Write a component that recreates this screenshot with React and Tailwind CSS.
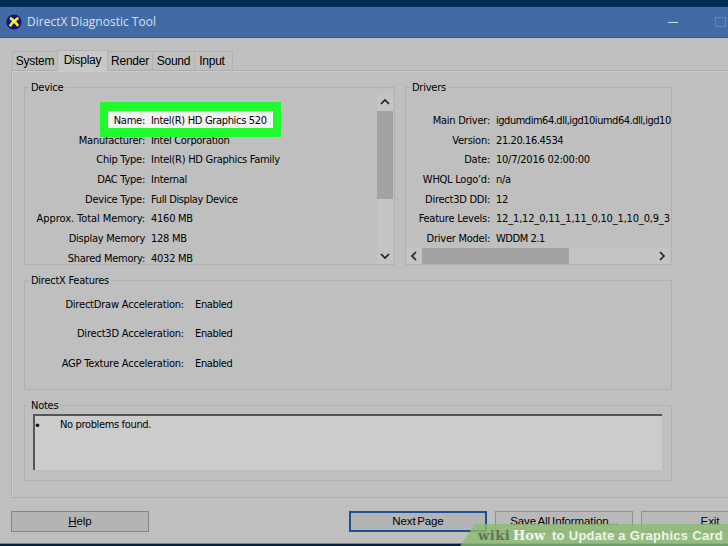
const deviceRows = [
  { label: "Name:", value: "Intel(R) HD Graphics 520", highlight: true, tracking: "tracking-[-0.33px]" },
  { label: "Manufacturer:", value: "Intel Corporation", tracking: "tracking-[-0.3px]" },
  { label: "Chip Type:", value: "Intel(R) HD Graphics Family", tracking: "tracking-[-0.28px]" },
  { label: "DAC Type:", value: "Internal" },
  { label: "Device Type:", value: "Full Display Device", tracking: "tracking-[-0.37px]" },
  { label: "Approx. Total Memory:", value: "4160 MB", labelTracking: "tracking-[-0.07px]" },
  { label: "Display Memory", value: "128 MB" },
  { label: "Shared Memory:", value: "4032 MB" },
];

const driverRows = [
  { label: "Main Driver:", value: "igdumdim64.dll,igd10iumd64.dll,igd10", tracking: "tracking-[-0.48px]" },
  { label: "Version:", value: "21.20.16.4534", tracking: "tracking-[-0.4px]" },
  { label: "Date:", value: "10/7/2016 02:00:00" },
  { label: "WHQL Logo’d:", value: "n/a" },
  { label: "Direct3D DDI:", value: "12" },
  { label: "Feature Levels:", value: "12_1,12_0,11_1,11_0,10_1,10_0,9_3", tracking: "tracking-[-0.17px]" },
  { label: "Driver Model:", value: "WDDM 2.1", tracking: "tracking-[-0.45px]" },
];

const features = ["DirectDraw Acceleration:", "Direct3D Acceleration:", "AGP Texture Acceleration:"];

const Chevron = ({ d }) => (
  <svg width="10" height="10" viewBox="0 0 10 10" fill="none" stroke="#222" strokeWidth="1.7" className="shrink-0">
    <path d={d} />
  </svg>
);

const Group = ({ title, className, children }) => (
  <fieldset className={`border border-[#b1b1b1] min-w-0 ${className}`}>
    <legend className="ml-[4px] px-[2px] h-4 leading-[18px]">{title}</legend>
    {children}
  </fieldset>
);

const Row = ({ label, value, highlight, labelWidth, tracking = "", labelTracking = "" }) => (
  <div className="relative flex h-[19.7px] items-center whitespace-nowrap">
    {highlight && (
      <div className="absolute z-10 left-[75px] -top-[9.4px] w-[181px] h-[35px] border-[9px] border-r-[8px] border-l-[8px] border-[#1ffb2c] bg-[#f3f3f3]" />
    )}
    <span className={`${labelWidth} ${labelTracking} shrink-0 text-right ${highlight ? "relative z-20" : ""}`}>{label}</span>
    <span className={`ml-[6px] ${tracking} ${highlight ? "relative z-20" : ""}`}>{value}</span>
  </div>
);

const TitleBar = () => (
  <div className="flex h-[31px] shrink-0 items-center bg-[#426aa5] border-b border-[#34588d] pl-[6px]">
    <svg width="16" height="16" viewBox="0 0 16 16">
      <circle cx="8" cy="8" r="7.6" fill="#10137a" />
      <path d="M4 4 Q8 6 12.2 12 M12.4 3.8 Q7 7 3.8 12.2" stroke="#f4e62c" strokeWidth="2.7" fill="none" />
      <circle cx="8" cy="8" r="1.4" fill="#fff36b" />
    </svg>
    <span className="ml-[5px] text-[12px] tracking-normal text-[#d6e0ef] font-['Open_Sans',sans-serif] [font-stretch:normal]">DirectX Diagnostic Tool</span>
    <div className="ml-auto flex items-center gap-[37px]">
      <div className="h-px w-[10px] bg-[#d0dcec]" />
      <div className="mr-[2px] h-[10px] w-[11px] border border-[#5f86c0]" />
    </div>
  </div>
);

const Tabs = () => (
  <div className="flex h-[20px] items-end pl-[12px] text-[12px] font-['Liberation_Sans',sans-serif]">
    <div className="flex h-[19px] w-[45px] items-center justify-center border-l border-t border-[#b2b2b2]">System</div>
    <div className="relative z-10 flex h-[21px] w-[51px] -mb-px items-center justify-center border border-b-0 border-[#b2b2b2] bg-[#c8c8c8] pb-[3px]">Display</div>
    <div className="flex h-[19px] w-[45px] items-center justify-center border-r border-t border-[#b2b2b2]">Render</div>
    <div className="flex h-[19px] w-[42px] items-center justify-center border-r border-t border-[#b2b2b2]">Sound</div>
    <div className="flex h-[19px] w-[38px] items-center justify-center border-r border-t border-[#b2b2b2] pr-[3px]">Input</div>
  </div>
);

const Watermark = () => (
  <div className="absolute bottom-0 right-0 flex h-[22px] w-[268px] items-center whitespace-nowrap">
    <svg className="absolute inset-0" width="268" height="22" viewBox="0 0 268 22">
      <path d="M15 0 H268 V22 H0 Z" fill="#8cbc72" fillOpacity="0.8" />
    </svg>
    <div className="relative ml-[18px] flex items-baseline leading-none [font-stretch:normal]">
      <span className="w-[35px] text-[13px] font-bold text-[#64715a] font-['DejaVu_Serif',serif] tracking-[0.5px]">wiki</span>
      <span className="w-[39px] text-[13px] font-bold text-[#f5f8f2] font-['DejaVu_Serif',serif] tracking-normal">How</span>
      <span className="text-[13px] font-bold text-[#eef4e9] font-['Liberation_Sans',sans-serif] tracking-[0.28px]">to Update a Graphics Card</span>
    </div>
  </div>
);

const App = () => {
  return (
    <div className="relative flex h-[546px] w-[728px] flex-col overflow-hidden bg-[#bfbfbf] text-[11px] text-black font-['DejaVu_Sans_Condensed','DejaVu_Sans',sans-serif] [font-stretch:condensed] tracking-[-0.25px]">
      <div className="h-[7px] shrink-0 bg-[#022c51]" />
      <TitleBar />

      <div className="flex flex-1 flex-col pt-[12px]">
        <Tabs />

        {/* Display tab page */}
        <div className="ml-[11px] h-[428px] border border-r-0 border-[#adadad] shadow-[inset_1px_1px_0_#cbcbcb] pl-[12px] pt-[8px]">
          <div className="flex gap-[10px]">
            <Group title="Device" className="h-[186px] w-[371px]">
              <div className="flex h-[169px] justify-between">
                <div className="pt-[16.4px]">
                  {deviceRows.map((row) => (
                    <Row key={row.label} {...row} labelWidth="w-[120px]" />
                  ))}
                </div>
                <div className="-mt-[2px] mr-px flex h-[171px] w-[16px] shrink-0 flex-col items-center bg-[#c4c4c4]">
                  <div className="flex h-[18px] items-center">
                    <Chevron d="M1 7 L5 3 L9 7" />
                  </div>
                  <div className="h-[88px] w-full bg-[#a3a3a3]" />
                  <div className="mt-auto flex h-[17px] items-center">
                    <Chevron d="M1 3 L5 7 L9 3" />
                  </div>
                </div>
              </div>
            </Group>

            <Group title="Drivers" className="h-[186px] w-[267px]">
              <div className="flex h-[169px] flex-col justify-between">
                <div className="h-[153px] pt-[16.4px]">
                  {driverRows.map((row) => (
                    <Row key={row.label} {...row} labelWidth="w-[84px]" />
                  ))}
                </div>
                <div className="flex h-[16px] shrink-0 items-center bg-[#c4c4c4]">
                  <div className="flex w-[16px] justify-center">
                    <Chevron d="M7 1 L3 5 L7 9" />
                  </div>
                  <div className="h-full w-[147px] bg-[#a3a3a3]" />
                  <div className="ml-auto flex w-[18px] justify-center">
                    <Chevron d="M3 1 L7 5 L3 9" />
                  </div>
                </div>
              </div>
            </Group>
          </div>

          <Group title="DirectX Features" className="mt-[7px] h-[118px] w-[648px]">
            <div className="pt-[2px]">
              {features.map((name) => (
                <div key={name} className="flex h-[29.5px] items-center">
                  <span className="w-[159px] text-right tracking-[-0.2px]">{name}</span>
                  <span className="ml-[11px] tracking-[-0.35px]">Enabled</span>
                </div>
              ))}
            </div>
          </Group>

          <Group title="Notes" className="mt-[7px] h-[84px] w-[648px]">
            <div className="ml-[8px] mr-[9px] mt-[1px] flex h-[56px] border-l-2 border-t-2 border-[#555] bg-[#cccccc]">
              <span className="-ml-px mt-[4px] h-[11px] w-[26px] leading-[11px] text-[13px]">•</span>
              <span className="mt-[1px] h-[16px] leading-[16px] tracking-[-0.35px]">No problems found.</span>
            </div>
          </Group>
        </div>

        {/* Footer buttons */}
        <div className="mt-[13px] flex whitespace-nowrap pl-[11px] text-[11.5px] tracking-[-0.1px] font-['Liberation_Sans',sans-serif]">
          <button className="h-[21px] w-[138px] shrink-0 border border-[#858585] bg-[#b4b4b4]">
            <span className="underline">H</span>elp
          </button>
          <button className="ml-[200px] h-[21px] w-[138px] shrink-0 border-2 border-[#1c4f94] bg-[#b4b4b4] [word-spacing:-1.5px]">Next Page</button>
          <button className="ml-[8px] h-[21px] w-[138px] shrink-0 border border-[#909090] bg-[#b9b9b9] [word-spacing:-1px]">Save All Information...</button>
          <button className="ml-[8px] h-[21px] w-[138px] shrink-0 border border-[#909090] bg-[#b9b9b9]">Exit</button>
        </div>
      </div>

      <div className="h-[3px] shrink-0 border-t border-[#5f87b5] bg-[#06223f]" />
      <Watermark />
    </div>
  );
};

export default App;
